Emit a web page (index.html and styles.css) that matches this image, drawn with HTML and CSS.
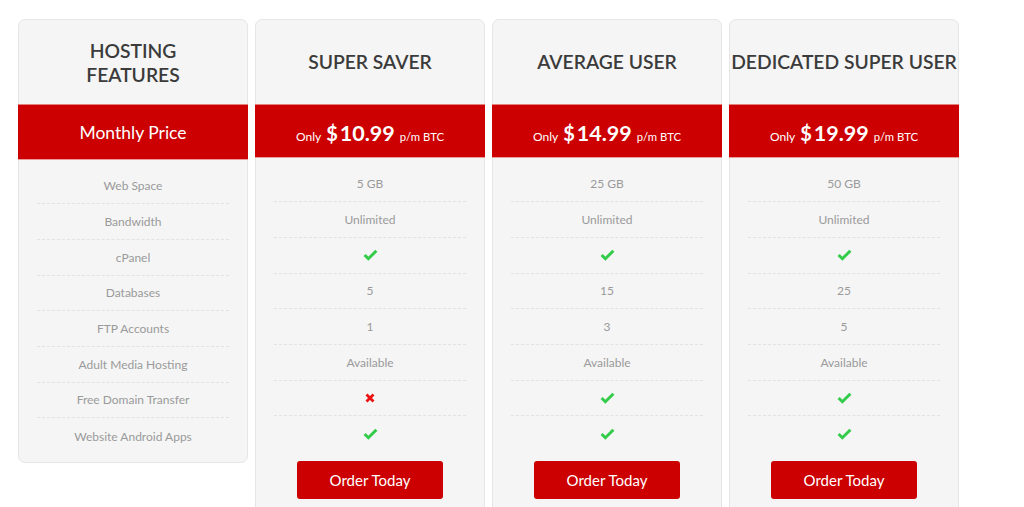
FILE: index.html
```html
<!DOCTYPE html>
<html>
<head>
<meta charset="utf-8">
<link rel="stylesheet" href="styles.css">
</head>
<body>
<div class="tables">
  <div class="card features">
    <div class="head"><h2>HOSTING<br>FEATURES</h2></div>
    <div class="band band-tall"><span class="monthly">Monthly Price</span></div>
    <ul class="rows">
      <li>Web Space</li>
      <li>Bandwidth</li>
      <li>cPanel</li>
      <li>Databases</li>
      <li>FTP Accounts</li>
      <li>Adult Media Hosting</li>
      <li>Free Domain Transfer</li>
      <li>Website Android Apps</li>
    </ul>
  </div>

  <div class="card plan">
    <div class="head"><h2>SUPER SAVER</h2></div>
    <div class="band"><span class="only">Only</span><span class="cur">$</span><span class="amt">10.99</span><span class="per">p/m BTC</span></div>
    <ul class="rows">
      <li>5 GB</li>
      <li>Unlimited</li>
      <li><svg class="ok" viewBox="0 0 14 11"><path d="M1.5 5.5 L5 9 L12.5 1.5"/></svg></li>
      <li>5</li>
      <li>1</li>
      <li>Available</li>
      <li><svg class="no" viewBox="0 0 10 10"><path d="M1.5 1.5 L8.5 8.5 M8.5 1.5 L1.5 8.5"/></svg></li>
      <li><svg class="ok" viewBox="0 0 14 11"><path d="M1.5 5.5 L5 9 L12.5 1.5"/></svg></li>
    </ul>
    <div class="foot"><a class="btn">Order Today</a></div>
  </div>

  <div class="card plan">
    <div class="head"><h2>AVERAGE USER</h2></div>
    <div class="band"><span class="only">Only</span><span class="cur">$</span><span class="amt">14.99</span><span class="per">p/m BTC</span></div>
    <ul class="rows">
      <li>25 GB</li>
      <li>Unlimited</li>
      <li><svg class="ok" viewBox="0 0 14 11"><path d="M1.5 5.5 L5 9 L12.5 1.5"/></svg></li>
      <li>15</li>
      <li>3</li>
      <li>Available</li>
      <li><svg class="ok" viewBox="0 0 14 11"><path d="M1.5 5.5 L5 9 L12.5 1.5"/></svg></li>
      <li><svg class="ok" viewBox="0 0 14 11"><path d="M1.5 5.5 L5 9 L12.5 1.5"/></svg></li>
    </ul>
    <div class="foot"><a class="btn">Order Today</a></div>
  </div>

  <div class="card plan">
    <div class="head"><h2>DEDICATED SUPER USER</h2></div>
    <div class="band"><span class="only">Only</span><span class="cur">$</span><span class="amt">19.99</span><span class="per">p/m BTC</span></div>
    <ul class="rows">
      <li>50 GB</li>
      <li>Unlimited</li>
      <li><svg class="ok" viewBox="0 0 14 11"><path d="M1.5 5.5 L5 9 L12.5 1.5"/></svg></li>
      <li>25</li>
      <li>5</li>
      <li>Available</li>
      <li><svg class="ok" viewBox="0 0 14 11"><path d="M1.5 5.5 L5 9 L12.5 1.5"/></svg></li>
      <li><svg class="ok" viewBox="0 0 14 11"><path d="M1.5 5.5 L5 9 L12.5 1.5"/></svg></li>
    </ul>
    <div class="foot"><a class="btn">Order Today</a></div>
  </div>
</div>
</body>
</html>
```

FILE: styles.css
```css
html, body {
  margin: 0;
  padding: 0;
  background: #ffffff;
  font-family: Lato, "Open Sans", sans-serif;
  overflow: hidden;
}

.tables {
  display: flex;
  align-items: flex-start;
  gap: 7px;
  padding: 19px 0 0 18px;
}

.card {
  width: 230px;
  box-sizing: border-box;
  background: #f5f5f5;
  border: 1px solid #e6e6e6;
  border-radius: 7px;
}

.plan {
  border-bottom-left-radius: 0;
  border-bottom-right-radius: 0;
  height: 520px;
}

.head {
  height: 84px;
  display: flex;
  align-items: center;
  justify-content: center;
  text-align: center;
}

.head h2 {
  margin: 0;
  font-size: 19.3px;
  font-weight: 600;
  line-height: 24px;
  color: #3b3b3b;
  white-space: nowrap;
}

.features .head h2 {
  padding-top: 2px;
}

.band {
  margin: 0 -1px;
  height: 54px;
  box-sizing: border-box;
  background: #cc0000;
  border-top: 1px solid #e58080;
  border-bottom: 1px solid #ec9b9b;
  display: flex;
  align-items: baseline;
  justify-content: center;
  padding-top: 16px;
  color: #fff;
}

.band-tall {
  height: 56px;
  padding-top: 17px;
}

.monthly {
  font-size: 17.5px;
  line-height: 22px;
}

.only {
  font-size: 12px;
  margin-right: 5px;
}

.cur {
  font-size: 20px;
  font-weight: 700;
  margin-right: 2px;
}

.amt {
  font-size: 21.5px;
  font-weight: 700;
  line-height: 22px;
  margin-right: 5px;
}

.per {
  font-size: 11.3px;
}

.rows {
  list-style: none;
  margin: 0;
  padding: 8.5px 18px 8px 18px;
}

.rows li {
  height: 35.7px;
  box-sizing: border-box;
  display: flex;
  align-items: center;
  justify-content: center;
  font-size: 12px;
  font-weight: 400;
  color: #9a9a9a;
  border-bottom: 1px dashed #e2e2e2;
}

.rows li:last-child {
  border-bottom: none;
}

.ok {
  width: 15px;
  height: 12px;
  fill: none;
  stroke: #33cc4a;
  stroke-width: 2.8;
  stroke-linecap: butt;
}

.no {
  width: 10px;
  height: 10px;
  fill: none;
  stroke: #ee1111;
  stroke-width: 2.8;
}

.foot {
  display: flex;
  justify-content: center;
  padding-top: 1px;
}

.btn {
  width: 146px;
  height: 38px;
  border-radius: 3px;
  background: #cc0000;
  color: #fff;
  font-size: 15px;
  display: flex;
  align-items: center;
  justify-content: center;
}
```
